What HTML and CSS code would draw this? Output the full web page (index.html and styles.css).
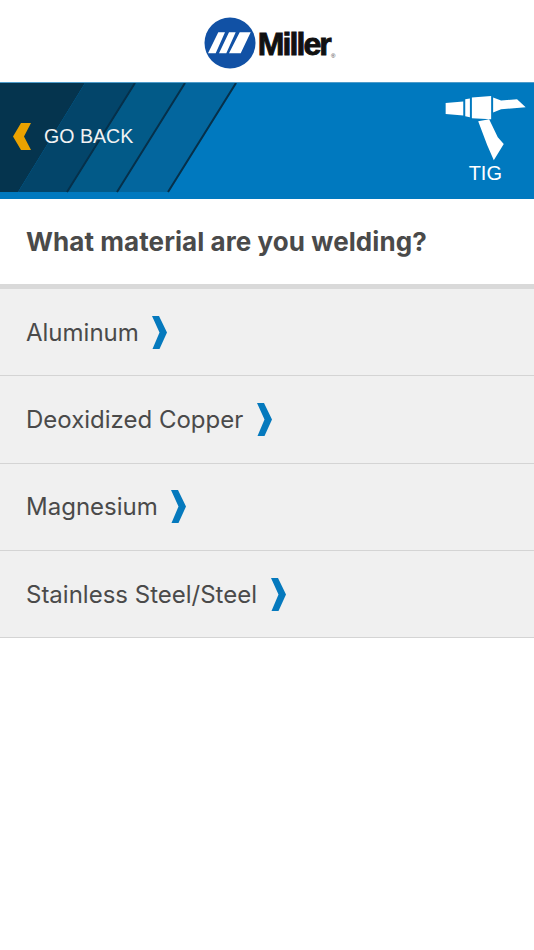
FILE: index.html
```html
<!DOCTYPE html>
<html lang="en">
<head>
    <meta charset="UTF-8">
    <meta name="viewport" content="width=device-width, initial-scale=1.0">
    <title>Miller - TIG</title>
    <link rel="stylesheet" href="styles.css">
</head>
<body>
    <header class="top-bar">
        <div class="logo">
            <svg class="logo-mark" viewBox="0 0 52 52" width="52" height="52">
                <circle cx="26" cy="26" r="25.5" fill="#1151a5"/>
                <path d="M4 36.3 L14.3 15.3 H21 L11.7 36.3Z M15 36.3 L25 15.3 H31.7 L22.3 36.3Z M25 36.3 L35.7 15.3 H46.7 L36.7 36.3Z" fill="#fff"/>
            </svg>
            <span class="logo-name">Miller</span><span class="logo-reg">®</span>
        </div>
    </header>

    <section class="banner">
        <svg class="banner-stripes" viewBox="0 0 240 110" width="240" height="110">
            <polygon points="0,0 85,0 18,109 0,109" fill="#05344e"/>
            <polygon points="85,0 136,0 68,109 18,109" fill="#03456a"/>
            <polygon points="136,0 186,0 118,109 68,109" fill="#025a88"/>
            <polygon points="186,0 237,0 169,109 118,109" fill="#03669e"/>
            <path d="M135 0 L67 109 M185 0 L117 109 M236 0 L168 109" stroke="#06304a" stroke-width="2" fill="none"/>
        </svg>
        <a class="go-back" href="#">
            <svg class="back-arrow" viewBox="0 0 18 27" width="18" height="27">
                <path d="M18 0 H8 L0 13.5 L8 27 H18 L11 13.5Z" fill="#eba200"/>
            </svg>
            GO BACK
        </a>
        <div class="process">
            <svg class="torch" viewBox="90 50 250 200" width="83" height="67">
                <path d="M95 73 L148 69 V111 L95 106Z M154 62 L168 60 V116 L154 113Z M174 57 L232 52 V122 L174 119Z M238 57 L262 66 L310 62 L336 86 L262 92 L238 102Z M193 128 L226 122 L252 176 L270 197 L240 246 L220 200Z" fill="#fff"/>
            </svg>
            <span class="process-name">TIG</span>
        </div>
    </section>

    <h1 class="question">What material are you welding?</h1>

    <ul class="material-list">
        <li class="material"><span>Aluminum</span><svg class="next-arrow" viewBox="0 0 15 33" width="15" height="33"><path d="M0 0 H7 L15 16.5 L7.5 33 H0.5 L7.5 16.5Z"/></svg></li>
        <li class="material"><span>Deoxidized Copper</span><svg class="next-arrow" viewBox="0 0 15 33" width="15" height="33"><path d="M0 0 H7 L15 16.5 L7.5 33 H0.5 L7.5 16.5Z"/></svg></li>
        <li class="material"><span>Magnesium</span><svg class="next-arrow" viewBox="0 0 15 33" width="15" height="33"><path d="M0 0 H7 L15 16.5 L7.5 33 H0.5 L7.5 16.5Z"/></svg></li>
        <li class="material"><span>Stainless Steel/Steel</span><svg class="next-arrow" viewBox="0 0 15 33" width="15" height="33"><path d="M0 0 H7 L15 16.5 L7.5 33 H0.5 L7.5 16.5Z"/></svg></li>
    </ul>
</body>
</html>
```

FILE: styles.css
```css
* {
    margin: 0;
    padding: 0;
    box-sizing: border-box;
}

body {
    font-family: Inter, "Liberation Sans", sans-serif;
    background: #fff;
    color: #4a4a4a;
}

.top-bar {
    height: 82px;
    display: flex;
    align-items: center;
    justify-content: center;
}

.logo {
    display: flex;
    align-items: center;
    margin: 3px 0 0 5px;
}

.logo-name {
    font-family: "Liberation Sans", sans-serif;
    font-weight: bold;
    font-size: 32px;
    letter-spacing: -1.9px;
    color: #111;
    margin: 3px 0 0 2px;
    -webkit-text-stroke: 0.9px #111;
}

.logo-reg {
    font-family: "Liberation Sans", sans-serif;
    font-size: 6px;
    color: #333;
    align-self: flex-end;
    margin: 0 0 10px 1px;
}

.banner {
    position: relative;
    height: 117px;
    background: #0079bf;
    border-top: 1px solid #4d9ccb;
    display: flex;
    justify-content: space-between;
    color: #fff;
    overflow: hidden;
}

.banner-stripes {
    position: absolute;
    left: 0;
    top: 0;
}

.go-back {
    position: relative;
    display: flex;
    align-items: center;
    gap: 13px;
    padding: 0 0 9px 13px;
    color: #f2f2f2;
    text-decoration: none;
    font-family: "Liberation Sans", sans-serif;
    font-size: 19.6px;
}

.process {
    display: flex;
    flex-direction: column;
    align-items: flex-end;
    padding: 12px 7px 0 0;
}

.process-name {
    font-family: "Liberation Sans", sans-serif;
    font-size: 20px;
    line-height: 23px;
    margin: 0 25px 0 0;
}

.question {
    height: 84px;
    padding: 0 0 1px 26px;
    display: flex;
    align-items: center;
    font-size: 26px;
    font-weight: 700;
    letter-spacing: 0.07px;
    margin-top: 1px;
}

.material-list {
    list-style: none;
    border-top: 5px solid #d9d9d9;
}

.material {
    height: 87.3px;
    background: #f0f0f0;
    border-bottom: 1px solid #d4d4d4;
    display: flex;
    align-items: center;
    gap: 13.5px;
    padding-left: 26px;
    font-size: 24px;
}

.next-arrow {
    fill: #0579bd;
}
```
